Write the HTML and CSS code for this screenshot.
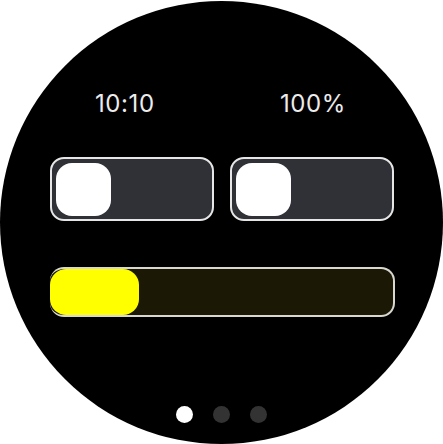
FILE: index.html
```html
<!DOCTYPE html>
<html>
<head>
<meta charset="utf-8">
<link rel="stylesheet" href="styles.css">
</head>
<body>
<div class="watch">
  <div class="status">
    <span class="time">10:10</span>
    <span class="battery">100%</span>
  </div>
  <div class="toggles">
    <div class="toggle"><div class="knob"></div></div>
    <div class="toggle"><div class="knob"></div></div>
  </div>
  <div class="bar"><div class="fill"></div></div>
  <div class="dots">
    <span class="dot active"></span>
    <span class="dot"></span>
    <span class="dot"></span>
  </div>
</div>
</body>
</html>
```
FILE: styles.css
```css
html, body {
  margin: 0;
  padding: 0;
  background: #fff;
}
.watch {
  width: 443px;
  height: 443px;
  margin-top: 1px;
  border-radius: 50%;
  background: #000;
  display: flex;
  flex-direction: column;
  align-items: center;
  box-sizing: border-box;
  padding-top: 88px;
  font-family: Inter, "Noto Sans", sans-serif;
}
.status {
  width: 344px;
  margin-left: 1px;
  display: flex;
  justify-content: space-between;
  box-sizing: border-box;
  padding: 0 48px 0 45px;
  color: #ececec;
  font-size: 24px;
  line-height: 30px;
  letter-spacing: 0.6px;
}
.toggles {
  margin-top: 38px;
  margin-left: 1px;
  display: flex;
  gap: 16px;
}
.toggle {
  width: 164px;
  height: 64px;
  box-sizing: border-box;
  border: 2px solid #e6e6e6;
  border-radius: 14px;
  background: #2f3136;
  padding: 4px 0 0 4px;
}
.knob {
  width: 55px;
  height: 53px;
  background: #fff;
  border-radius: 16px;
}
.bar {
  margin-top: 46px;
  margin-left: 1px;
  width: 345px;
  height: 50px;
  box-sizing: border-box;
  border: 2px solid #d8d8d0;
  border-left: none;
  border-radius: 14px;
  background: #1b1905;
  overflow: hidden;
}
.fill {
  width: 89px;
  height: 100%;
  background: #ffff00;
  border-radius: 16px;
}
.dots {
  margin-top: 89px;
  display: flex;
  gap: 20px;
}
.dot {
  width: 17px;
  height: 17px;
  border-radius: 50%;
  background: #333;
}
.dot.active {
  background: #fff;
}
```
